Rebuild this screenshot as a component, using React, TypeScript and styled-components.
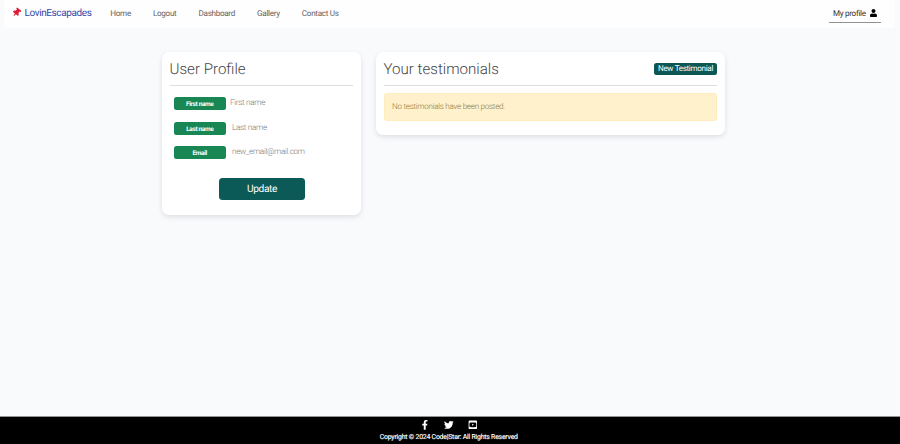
import React from "react";
import styled, { createGlobalStyle } from "styled-components";
import { FaFacebookF, FaTwitter, FaYoutubeSquare, FaUser, FaThumbtack } from "react-icons/fa";

const GlobalStyle = createGlobalStyle`
  * { box-sizing: border-box; }
  body { margin: 0; background: #f9fafc; font-family: Roboto, "Liberation Sans", sans-serif; text-rendering: geometricPrecision; }
  button { text-rendering: inherit; }
`;
const Page = styled.div`
  height: 444px;
  display: flex;
  flex-direction: column;
  overflow: hidden;
`;
const Navbar = styled.nav`
  height: 28px;
  margin: 0 5px 0 4px;
  padding: 0 14px 0 8px;
  display: flex;
  align-items: flex-start;
  background: #fefefe;
`;
const Brand = styled.a`
  display: flex;
  align-items: center;
  width: 98.3px;
  height: 26px;
  color: #3547a8;
  font-size: 10px;
  letter-spacing: -0.4px;
  white-space: nowrap;
  svg { color: #dc1c32; width: 9px; height: 9px; margin: 0 4px 1px -0.5px; transform: rotate(40deg); }
`;
const Links = styled.div`
  display: flex;
  gap: 22.1px;
  flex: 1;
`;
const NavLink = styled.a`
  height: 26px;
  line-height: 26px;
  font-size: 8.1px;
  letter-spacing: -0.3px;
  color: #626262;
  white-space: nowrap;
`;
const ProfileLink = styled.a`
  display: flex;
  align-items: center;
  justify-content: space-between;
  width: 52px;
  height: 23px;
  padding: 3px 4px 0;
  border-bottom: 1px solid #929292;
  font-size: 8.1px;
  letter-spacing: -0.3px;
  color: #333;
  white-space: nowrap;
  svg { width: 7px; height: 8px; color: #000; }
`;
const Main = styled.main`
  flex: 1;
  display: flex;
  align-items: flex-start;
  gap: 15px;
  padding: 24px 0 0 162px;
`;
const Card = styled.section<{ $width: number; $height: number }>`
  width: ${(p) => p.$width}px;
  height: ${(p) => p.$height}px;
  padding: 0 8px;
  border-radius: 7px;
  background: #fff;
  box-shadow: 0 2px 5px rgba(40, 50, 60, 0.13);
`;
const CardHeader = styled.header`
  height: 34px;
  display: flex;
  align-items: center;
  justify-content: space-between;
  border-bottom: 1px solid #dedede;
`;
const Title = styled.h2`
  margin: 0 0 0 -0.5px;
  font-size: 15.1px;
  line-height: 18px;
  font-weight: 300;
  color: #444;
  white-space: nowrap;
`;
const SmallButton = styled.button`
  width: 63px;
  height: 12px;
  padding: 0 0 1px;
  border: 0;
  border-radius: 2.5px;
  background: #0c5754;
  color: #fff;
  font: 400 8.1px/11px Roboto, sans-serif;
  letter-spacing: -0.33px;
  white-space: nowrap;
`;
const Fields = styled.div`
  display: grid;
  gap: 11.5px;
  padding: 11px 4px 0 3.5px;
`;
const Field = styled.div<{ $gap: number }>`
  display: flex;
  gap: ${(p) => p.$gap}px;
  height: 13px;
`;
const Label = styled.span`
  width: 52.5px;
  height: 13px;
  border-radius: 2.5px;
  background: #198754;
  color: #fff;
  text-align: center;
  font-size: 6.5px;
  line-height: 14.5px;
  font-weight: 700;
  letter-spacing: -0.36px;
`;
const Value = styled.span`
  font-size: 8.1px;
  line-height: 10.5px;
  font-weight: 300;
  letter-spacing: -0.29px;
  color: #777;
  white-space: nowrap;
`;
const UpdateButton = styled.button`
  display: block;
  width: 86px;
  height: 22px;
  margin: 19px 0 0 49px;
  padding: 0;
  border: 0;
  border-radius: 3.5px;
  background: #0c5a58;
  color: #fff;
  font: 400 10.2px/23px Roboto, sans-serif;
  letter-spacing: -0.35px;
`;
const Alert = styled.div`
  height: 28px;
  margin-top: 7px;
  padding-left: 7px;
  border: 1px solid #ffecbd;
  border-radius: 2.5px;
  background: #fff1cb;
  color: #8b7740;
  font-size: 8.1px;
  letter-spacing: -0.28px;
  line-height: 24.5px;
  font-weight: 300;
`;
const Footer = styled.footer`
  height: 28px;
  border-top: 1px solid #929394;
  background: #000;
  color: #fff;
  display: flex;
  flex-direction: column;
  align-items: center;
  padding-right: 2.5px;
`;
const Socials = styled.div`
  height: 16px;
  display: flex;
  align-items: center;
  gap: 14px;
  svg { width: 9.7px; height: 9.7px; }
`;
const Copyright = styled.p`
  margin: 0;
  font-size: 6.9px;
  letter-spacing: -0.21px;
  line-height: 9px;
  -webkit-text-stroke: 0.15px #fff;
  white-space: nowrap;
`;

const links = ["Home", "Logout", "Dashboard", "Gallery", "Contact Us"];
const fields = [
  { label: "First name", value: "First name", gap: 4 },
  { label: "Last name", value: "Last name", gap: 6 },
  { label: "Email", value: "new_email@mail.com", gap: 6 },
];

export default function App() {
  return (
    <Page>
      <GlobalStyle />
      <Navbar>
        <Brand><FaThumbtack />LovinEscapades</Brand>
        <Links>{links.map((l) => <NavLink key={l}>{l}</NavLink>)}</Links>
        <ProfileLink>My profile <FaUser /></ProfileLink>
      </Navbar>
      <Main>
        <Card $width={199} $height={163}>
          <CardHeader><Title>User Profile</Title></CardHeader>
          <Fields>
            {fields.map((f) => (
              <Field key={f.label} $gap={f.gap}><Label>{f.label}</Label><Value>{f.value}</Value></Field>
            ))}
          </Fields>
          <UpdateButton>Update</UpdateButton>
        </Card>
        <Card $width={349} $height={83}>
          <CardHeader><Title>Your testimonials</Title><SmallButton>New Testimonial</SmallButton></CardHeader>
          <Alert>No testimonials have been posted.</Alert>
        </Card>
      </Main>
      <Footer>
        <Socials><FaFacebookF /><FaTwitter /><FaYoutubeSquare /></Socials>
        <Copyright>Copyright © 2024 Code|Star: All Rights Reserved</Copyright>
      </Footer>
    </Page>
  );
}
